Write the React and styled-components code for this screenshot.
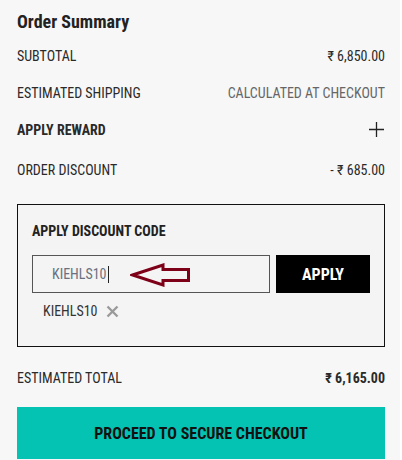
import React from 'react';
import styled, { createGlobalStyle } from 'styled-components';

const GlobalStyle = createGlobalStyle`
  html, body {
    margin: 0;
    padding: 0;
    background: #ffffff;
  }
  body {
    font-family: "Roboto Condensed", "Roboto", "Liberation Sans", sans-serif;
    font-stretch: condensed;
  }
`;

const Panel = styled.div`
  width: 400px;
  height: 460px;
  background: #f7f7f7;
  box-sizing: border-box;
  padding: 10px 15px 0 17px;
  overflow: hidden;
  color: #222;
`;

const Title = styled.h2`
  margin: 0 0 3px;
  font-size: 18px;
  font-weight: 700;
  color: #222;
  line-height: 24px;
`;

const Row = styled.div`
  display: flex;
  justify-content: space-between;
  align-items: center;
  height: ${(p) => p.h || 37}px;
  font-size: 14px;
`;

const Label = styled.span`
  font-weight: ${(p) => (p.bold ? 700 : 400)};
  color: #2a2a2a;
`;

const Value = styled.span`
  font-weight: ${(p) => (p.bold ? 700 : 400)};
  color: ${(p) => (p.muted ? '#666' : '#2a2a2a')};
`;

const PlusIcon = styled.svg`
  width: 17px;
  height: 17px;
`;

const DiscountBox = styled.div`
  margin-top: 12px;
  border: 1px solid #111;
  background: #f4f4f4;
  padding: 18px 14px 22px 14px;
  height: 143px;
  box-sizing: border-box;
`;

const BoxTitle = styled.div`
  font-size: 14px;
  font-weight: 700;
  color: #222;
  margin-bottom: 16px;
`;

const CodeForm = styled.div`
  display: flex;
  gap: 6px;
  align-items: stretch;
`;

const InputWrap = styled.div`
  position: relative;
  width: 238px;
  height: 38px;
  box-sizing: border-box;
  border: 1px solid #555;
  display: flex;
  align-items: center;
  padding-left: 19px;
  font-size: 14px;
  color: #6a7080;
`;

const Caret = styled.span`
  display: inline-block;
  width: 1px;
  height: 17px;
  background: #222;
  margin-left: 1px;
`;

const Arrow = styled.svg`
  position: absolute;
  left: 97px;
  top: 7px;
`;

const ApplyButton = styled.button`
  width: 94px;
  height: 38px;
  border: none;
  background: #000;
  color: #fff;
  font-family: inherit;
  font-stretch: condensed;
  font-size: 16px;
  font-weight: 700;
  cursor: pointer;
`;

const AppliedCode = styled.div`
  display: flex;
  align-items: center;
  gap: 8px;
  margin-top: 10px;
  padding-left: 11px;
  font-size: 14px;
  color: #333;
`;

const RemoveIcon = styled.svg`
  width: 13px;
  height: 13px;
`;

const TotalRow = styled(Row)`
  margin-top: 12px;
`;

const CheckoutButton = styled.button`
  width: 100%;
  height: 52px;
  margin-top: 11px;
  border: none;
  background: #05c3b3;
  color: #111;
  font-family: inherit;
  font-stretch: condensed;
  font-size: 16px;
  font-weight: 700;
  cursor: pointer;
`;

export default function App() {
  return (
    <>
      <GlobalStyle />
      <Panel>
        <Title>Order Summary</Title>
        <Row>
          <Label>SUBTOTAL</Label>
          <Value>₹ 6,850.00</Value>
        </Row>
        <Row>
          <Label>ESTIMATED SHIPPING</Label>
          <Value muted>CALCULATED AT CHECKOUT</Value>
        </Row>
        <Row>
          <Label bold>APPLY REWARD</Label>
          <PlusIcon viewBox="0 0 17 17">
            <path d="M8.5 1v15M1 8.5h15" stroke="#222" strokeWidth="1.3" fill="none" />
          </PlusIcon>
        </Row>
        <Row h={44}>
          <Label>ORDER DISCOUNT</Label>
          <Value>- ₹ 685.00</Value>
        </Row>

        <DiscountBox>
          <BoxTitle>APPLY DISCOUNT CODE</BoxTitle>
          <CodeForm>
            <InputWrap>
              KIEHLS10
              <Caret />
              <Arrow width="62" height="24" viewBox="0 0 62 24">
                <path
                  d="M2.5 12 L33 2 L33 6.5 L58.5 6.5 L58.5 17.5 L33 17.5 L33 22 Z"
                  fill="none"
                  stroke="#7d0018"
                  strokeWidth="3"
                  strokeLinejoin="miter"
                />
              </Arrow>
            </InputWrap>
            <ApplyButton>APPLY</ApplyButton>
          </CodeForm>
          <AppliedCode>
            KIEHLS10
            <RemoveIcon viewBox="0 0 13 13">
              <path d="M1.5 1.5L11.5 11.5M11.5 1.5L1.5 11.5" stroke="#9a9a9a" strokeWidth="2.4" />
            </RemoveIcon>
          </AppliedCode>
        </DiscountBox>

        <TotalRow>
          <Label>ESTIMATED TOTAL</Label>
          <Value bold>₹ 6,165.00</Value>
        </TotalRow>
        <CheckoutButton>PROCEED TO SECURE CHECKOUT</CheckoutButton>
      </Panel>
    </>
  );
}
